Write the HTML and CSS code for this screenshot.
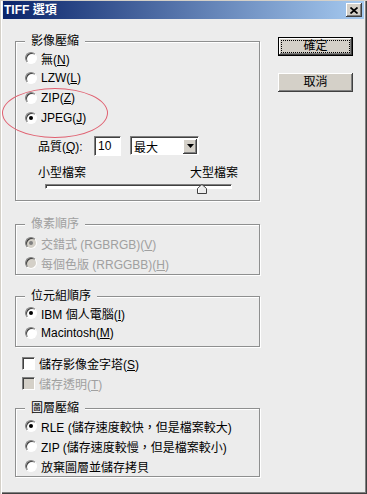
FILE: index.html
```html
<!DOCTYPE html>
<html lang="zh-Hant">
<head>
    <meta charset="UTF-8">
    <meta name="viewport" content="width=device-width, initial-scale=1.0">
    <title>TIFF 選項</title>
    <link rel="stylesheet" href="styles.css">
</head>
<body>
    <div class="window">
        <div class="titlebar">
            <span class="title">TIFF 選項</span>
            <button class="close-btn">
                <svg width="8" height="7" viewBox="0 0 8 7"><path d="M0.5 0.5 L7.5 6.5 M7.5 0.5 L0.5 6.5" stroke="#000" stroke-width="1.7"/></svg>
            </button>
        </div>

        <div class="dialog">
            <div class="options">
                <fieldset class="group group-compress">
                    <legend>影像壓縮</legend>
                    <label class="opt"><span class="radio"></span><span>無(<u>N</u>)</span></label>
                    <label class="opt"><span class="radio"></span><span>LZW(<u>L</u>)</span></label>
                    <label class="opt"><span class="radio"></span><span>ZIP(<u>Z</u>)</span></label>
                    <label class="opt"><span class="radio checked"></span><span>JPEG(<u>J</u>)</span></label>

                    <div class="quality">
                        <span class="quality-label">品質(<u>Q</u>):</span>
                        <span class="field">10</span>
                        <span class="dropdown">
                            <span class="dropdown-value">最大</span>
                            <span class="dropdown-btn">
                                <svg width="7" height="4" viewBox="0 0 7 4"><path d="M0 0 H7 L3.5 4 Z" fill="#000"/></svg>
                            </span>
                        </span>
                    </div>

                    <div class="size-labels">
                        <span>小型檔案</span>
                        <span>大型檔案</span>
                    </div>

                    <div class="slider">
                        <div class="track"></div>
                        <svg class="thumb" width="10" height="10" viewBox="0 0 10 10">
                            <path d="M0.5 9.5 V4.5 L5 0.5 L9.5 4.5 V9.5 Z" fill="#ececec" stroke="#404040"/>
                            <path d="M1.5 8.5 V4.9 L5 1.8" fill="none" stroke="#fff"/>
                        </svg>
                    </div>
                </fieldset>

                <fieldset class="group group-pixel disabled">
                    <legend>像素順序</legend>
                    <label class="opt"><span class="radio checked"></span><span>交錯式 (RGBRGB)(<u>V</u>)</span></label>
                    <label class="opt"><span class="radio"></span><span>每個色版 (RRGGBB)(<u>H</u>)</span></label>
                </fieldset>

                <fieldset class="group group-byte">
                    <legend>位元組順序</legend>
                    <label class="opt"><span class="radio checked"></span><span>IBM 個人電腦(<u>I</u>)</span></label>
                    <label class="opt"><span class="radio"></span><span>Macintosh(<u>M</u>)</span></label>
                </fieldset>

                <div class="checks">
                    <label class="check"><span class="box"></span><span>儲存影像金字塔(<u>S</u>)</span></label>
                    <label class="check disabled"><span class="box"></span><span>儲存透明(<u>T</u>)</span></label>
                </div>

                <fieldset class="group group-layer">
                    <legend>圖層壓縮</legend>
                    <label class="opt"><span class="radio checked"></span><span>RLE (儲存速度較快，但是檔案較大)</span></label>
                    <label class="opt"><span class="radio"></span><span>ZIP (儲存速度較慢，但是檔案較小)</span></label>
                    <label class="opt"><span class="radio"></span><span>放棄圖層並儲存拷貝</span></label>
                </fieldset>
            </div>

            <div class="actions">
                <button class="btn default"><span class="focus">確定</span></button>
                <button class="btn"><span class="label">取消</span></button>
            </div>
        </div>

        <!-- red circle drawn over the JPEG option -->
        <div class="annotation"></div>
    </div>
</body>
</html>
```

FILE: styles.css
```css
* {
    box-sizing: border-box;
    margin: 0;
    padding: 0;
}

body {
    background: #ececec;
    font-family: 'Liberation Sans', 'Noto Sans CJK TC', sans-serif;
    font-size: 12px;
    color: #000;
}

u { text-decoration: underline; text-underline-offset: 1px; }

.window {
    position: relative;
    width: 367px;
    height: 494px;
    background: #ececec;
    padding: 1px 3px 4px 3px;
    box-shadow: inset 1px 1px #d4d0c8, inset 2px 0 #fff,
                inset -1px -1px #404040, inset -2px -2px #808080;
}

.titlebar {
    height: 18px;
    display: flex;
    align-items: center;
    justify-content: space-between;
    padding: 0 2px 0 1px;
    background: linear-gradient(to right, #0a246a, #a6caf0);
}

.title {
    color: #fff;
    font-weight: bold;
    font-size: 12px;
    line-height: 18px;
}

.close-btn {
    width: 16px;
    height: 14px;
    border: none;
    background: #d4d0c8;
    display: flex;
    align-items: center;
    justify-content: center;
    box-shadow: inset -1px -1px #404040, inset 1px 1px #fff, inset -2px -2px #808080;
}

.dialog {
    display: flex;
    padding: 15px 0 0 12px;
}

.options { width: 245px; }

/* group boxes */
.group {
    border: 1px solid #8e8f8f;
    box-shadow: inset 1px 1px #fff, 1px 1px #fff;
    padding: 0 0 0 9px;
}

.group legend {
    margin-left: 0;
    padding: 0 6px;
    line-height: 14px;
    background: #ececec;
}

.group-compress { padding-bottom: 6px; }
.group-pixel { margin-top: 16px; padding-top: 2px; padding-bottom: 1px; }
.group-byte { margin-top: 14px; padding-bottom: 3px; }
.group-layer { margin-top: 8px; padding-top: 1px; }

.disabled,
.disabled legend { color: #a0a0a0; }

.opt {
    display: flex;
    align-items: center;
    gap: 4px;
    height: 20px;
    white-space: nowrap;
}

.radio {
    position: relative;
    flex: none;
    width: 12px;
    height: 12px;
    border-radius: 50%;
    background: #fff;
    border: 1px solid;
    border-color: #808080 #fff #fff #808080;
    box-shadow: inset 1px 1px #404040;
}

.radio.checked::after {
    content: "";
    position: absolute;
    left: 3px;
    top: 3px;
    width: 4px;
    height: 4px;
    border-radius: 50%;
    background: #000;
}

.disabled .radio { background: #d4d0c8; }
.disabled .radio.checked::after { background: #808080; }

/* quality row */
.quality {
    display: flex;
    align-items: center;
    height: 21px;
    margin: 7px 0 0 13px;
}

.quality-label { width: 56px; }

.field {
    width: 27px;
    height: 20px;
    background: #fff;
    border: 1px solid;
    border-color: #808080 #fff #fff #808080;
    box-shadow: inset 1px 1px #404040;
    padding-left: 3px;
    line-height: 18px;
}

.dropdown {
    display: flex;
    align-items: center;
    justify-content: space-between;
    width: 69px;
    height: 19px;
    margin-left: 9px;
    background: #fff;
    border: 1px solid;
    border-color: #808080 #fff #fff #808080;
    box-shadow: inset 1px 1px #404040;
    padding: 2px 1px 1px 3px;
}

.dropdown-btn {
    width: 14px;
    height: 15px;
    background: #d4d0c8;
    display: flex;
    align-items: center;
    justify-content: center;
    box-shadow: inset -1px -1px #404040, inset 1px 1px #fff, inset -2px -2px #808080;
}

.size-labels {
    display: flex;
    justify-content: space-between;
    width: 200px;
    margin: 10px 0 0 13px;
    line-height: 14px;
}

.slider {
    position: relative;
    width: 187px;
    height: 10px;
    margin: 3px 0 0 20px;
}

.track {
    margin-top: 4px;
    height: 5px;
    background: #fff;
    border: 1px solid;
    border-color: #808080 #fff #fff #808080;
    box-shadow: inset 1px 1px #404040;
}

.thumb {
    position: absolute;
    left: 152px;
    top: 0;
}

/* checkboxes */
.checks { margin-top: 6px; }

.check {
    display: flex;
    align-items: center;
    gap: 4px;
    height: 20px;
    padding-left: 7px;
}

.box {
    flex: none;
    width: 13px;
    height: 13px;
    background: #fff;
    border: 1px solid;
    border-color: #808080 #fff #fff #808080;
    box-shadow: inset 1px 1px #404040;
}

.check.disabled .box { background: #d4d0c8; }

/* buttons */
.actions {
    display: flex;
    flex-direction: column;
    gap: 17px;
    margin-left: 18px;
    padding-top: 3px;
}

.btn {
    display: flex;
    width: 75px;
    height: 19px;
    padding: 3px;
    border: none;
    background: #d4d0c8;
    font: inherit;
    box-shadow: inset -1px -1px #404040, inset 1px 1px #fff, inset -2px -2px #808080;
}

.btn.default {
    border: 1px solid #000;
    padding: 2px;
}

.btn .label,
.btn .focus {
    flex: 1;
    display: flex;
    align-items: center;
    justify-content: center;
    line-height: 11px;
}

.btn .focus { border: 1px dotted #000; }

.annotation {
    position: absolute;
    left: 2px;
    top: 88px;
    width: 106px;
    height: 50px;
    border: 1px solid #e06070;
    border-radius: 50%;
}
```
